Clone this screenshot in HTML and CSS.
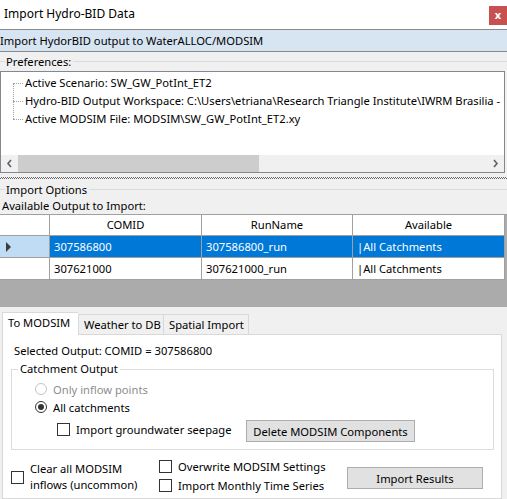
FILE: index.html
```html
<!DOCTYPE html>
<html lang="en">
<head>
  <meta charset="UTF-8">
  <title>Import Hydro-BID Data</title>
  <link rel="stylesheet" href="styles.css">
</head>
<body>

<div class="window">

  <!-- Title bar -->
  <div class="titlebar">
    <span class="title">Import Hydro-BID Data</span>
    <span class="close">x</span>
  </div>

  <div class="banner">Import HydorBID output to WaterALLOC/MODSIM</div>

  <!-- Preferences -->
  <div class="group-label"><span>Preferences:</span></div>
  <div class="tree">
    <div class="tree-items">
      <div class="tree-item">Active Scenario: SW_GW_PotInt_ET2</div>
      <div class="tree-item">Hydro-BID Output Workspace: C:\Users\etriana\Research Triangle Institute\IWRM Brasilia -</div>
      <div class="tree-item last">Active MODSIM File: MODSIM\SW_GW_PotInt_ET2.xy</div>
    </div>
    <div class="hscroll">
      <div class="arrow">
        <svg width="7" height="9" viewBox="0 0 7 9"><path d="M5 1 L2 4.5 L5 8" fill="none" stroke="#606060" stroke-width="1.6"/></svg>
      </div>
      <div class="track"><div class="thumb"></div></div>
      <div class="arrow">
        <svg width="7" height="9" viewBox="0 0 7 9"><path d="M2 1 L5 4.5 L2 8" fill="none" stroke="#606060" stroke-width="1.6"/></svg>
      </div>
    </div>
  </div>

  <div class="splitter"></div>

  <!-- Import options -->
  <div class="group-label short"><span>Import Options</span></div>
  <div class="caption">Available Output to Import:</div>

  <div class="grid">
    <div class="table">
      <div class="cell rowhead head"></div>
      <div class="cell head">COMID</div>
      <div class="cell head">RunName</div>
      <div class="cell head">Available</div>

      <div class="cell rowhead selected-head"><span class="pointer"></span></div>
      <div class="cell selected">307586800</div>
      <div class="cell selected">307586800_run</div>
      <div class="cell selected">|All Catchments</div>

      <div class="cell rowhead"></div>
      <div class="cell">307621000</div>
      <div class="cell">307621000_run</div>
      <div class="cell">|All Catchments</div>
    </div>
  </div>

  <div class="tabs">
    <div class="tab active">To MODSIM</div>
    <div class="tab">Weather to DB</div>
    <div class="tab">Spatial Import</div>
  </div>

  <div class="tab-page">
    <div class="selected-output">Selected Output: COMID = 307586800</div>

    <fieldset class="catchment">
      <legend>Catchment Output</legend>
      <div class="radio-row disabled"><span class="radio"></span>Only inflow points</div>
      <div class="radio-row"><span class="radio on"></span>All catchments</div>
      <div class="check-row">
        <label class="check-label"><span class="checkbox"></span>Import groundwater seepage</label>
        <button class="button delete">Delete MODSIM Components</button>
      </div>
    </fieldset>

    <div class="options">
      <label class="clear"><span class="checkbox"></span><span>Clear all MODSIM<br>inflows (uncommon)</span></label>
      <div class="checks">
        <label class="check-label"><span class="checkbox"></span>Overwrite MODSIM Settings</label>
        <label class="check-label"><span class="checkbox"></span>Import Monthly Time Series</label>
      </div>
      <button class="button import">Import Results</button>
    </div>
  </div>

</div>

</body>
</html>
```

FILE: styles.css
```css
* {
  box-sizing: border-box;
}

body {
  margin: 0;
  font-family: "Noto Sans", "Segoe UI", sans-serif;
  font-size: 11.2px;
  color: #000;
}

.window {
  width: 507px;
  height: 499px;
  overflow: hidden;
  background: #f0f0f0;
  display: flex;
  flex-direction: column;
}

/* Title bar */
.titlebar {
  height: 30px;
  flex-shrink: 0;
  background: #fff;
  border-bottom: 1px solid #8a8a8a;
  display: flex;
  justify-content: space-between;
  align-items: flex-start;
  padding-left: 4px;
}

.title {
  font-size: 12px;
  line-height: 28px;
}

.close {
  width: 18px;
  height: 19px;
  margin-top: 6px;
  background: #c75050;
  color: #fff;
  font-weight: bold;
  font-size: 11px;
  line-height: 17px;
  text-align: center;
}

.banner {
  height: 22px;
  flex-shrink: 0;
  background: #d7e4f2;
  border-bottom: 1px solid #8a8a8a;
  line-height: 21px;
  white-space: nowrap;
}

/* Group box captions */
.group-label {
  height: 19px;
  flex-shrink: 0;
  display: flex;
  align-items: center;
}

.group-label::before {
  content: "";
  width: 5px;
  border-top: 1px solid #dcdcdc;
}

.group-label::after {
  content: "";
  flex: 1;
  border-top: 1px solid #dcdcdc;
}

.group-label span {
  padding: 0 2px 0 1px;
}

.group-label.short {
  height: 16px;
}

/* Tree view */
.tree {
  width: 505px;
  height: 102px;
  flex-shrink: 0;
  background: #fff;
  border: 1px solid #828790;
  display: flex;
  flex-direction: column;
}

.tree-items {
  flex: 1;
  padding-top: 2px;
  overflow: hidden;
}

.tree-item {
  position: relative;
  height: 18px;
  line-height: 18px;
  padding-left: 24px;
  white-space: nowrap;
}

.tree-item::before {
  content: "";
  position: absolute;
  left: 12px;
  top: 9px;
  width: 10px;
  border-top: 1px dotted #a0a0a0;
}

.tree-item::after {
  content: "";
  position: absolute;
  left: 12px;
  top: 9px;
  height: 18px;
  border-left: 1px dotted #a0a0a0;
}

.tree-item.last::after {
  display: none;
}

.hscroll {
  height: 17px;
  display: flex;
  background: #f0f0f0;
}

.arrow {
  width: 17px;
  display: flex;
  align-items: center;
  justify-content: center;
}

.track {
  flex: 1;
}

.thumb {
  width: 241px;
  height: 100%;
  background: #cdcdcd;
}

.splitter {
  height: 8px;
  flex-shrink: 0;
  border-top: 4px solid #f0f0f0;
  border-bottom: 2px solid #f0f0f0;
  background: conic-gradient(#6a6a6a 25%, transparent 0 50%, #6a6a6a 0 75%, transparent 0) 0 0 / 2px 2px;
}

.caption {
  height: 17px;
  flex-shrink: 0;
  line-height: 18px;
  padding-left: 2px;
}

/* Data grid */
.grid {
  height: 93px;
  flex-shrink: 0;
  background: #ababab;
}

.table {
  display: grid;
  grid-template-columns: 50px 152px 151px 152px;
  border-top: 1px solid #a0a0a0;
}

.cell {
  height: 22px;
  line-height: 21px;
  padding-left: 4px;
  background: #fff;
  border-right: 1px solid #a0a0a0;
  border-bottom: 1px solid #a0a0a0;
  white-space: nowrap;
  overflow: hidden;
}

.cell.head {
  height: 21px;
  line-height: 20px;
  text-align: center;
  padding-left: 0;
}

.cell.selected {
  background: #0078d7;
  color: #fff;
}

.cell.selected-head {
  background: #bfdcf4;
  display: flex;
  align-items: center;
  padding-left: 6px;
}

.pointer {
  width: 0;
  height: 0;
  border-top: 5px solid transparent;
  border-bottom: 5px solid transparent;
  border-left: 5px solid #3c3c3c;
}

/* Tabs */
.tabs {
  height: 27px;
  flex-shrink: 0;
  display: flex;
  align-items: flex-end;
  padding-left: 2px;
}

.tab {
  height: 20px;
  line-height: 19px;
  padding-left: 5px;
  background: #f0f0f0;
  border: 1px solid #d9d9d9;
  border-bottom: none;
  white-space: nowrap;
}

.tab:nth-child(2) {
  width: 86px;
}

.tab:nth-child(3) {
  width: 85px;
  border-left: none;
}

.tab.active {
  position: relative;
  z-index: 1;
  width: 76px;
  height: 23px;
  margin-bottom: -1px;
  line-height: 20px;
  background: #fff;
  border-right: none;
}

.tab-page {
  flex: 1;
  margin: 0 5px 0 2px;
  padding: 8px 7px 0 8px;
  background: #fff;
  border: 1px solid #d9d9d9;
}

.selected-output {
  height: 16px;
  line-height: 16px;
  padding-left: 3px;
}

.catchment {
  margin: 2px 0 0 0;
  padding: 0 0 7px 6px;
  border: 1px solid #dcdcdc;
}

.catchment legend {
  padding: 0 2px;
  line-height: 16px;
}

.radio-row {
  height: 18px;
  display: flex;
  align-items: center;
  padding-left: 17px;
}

.radio-row:first-of-type {
  margin-top: 3px;
}

.radio-row.disabled {
  color: #8d8d8d;
}

.radio {
  width: 12px;
  height: 12px;
  margin-right: 6px;
  border: 1px solid #333;
  border-radius: 50%;
  display: flex;
  align-items: center;
  justify-content: center;
}

.disabled .radio {
  border-color: #c4c4c4;
}

.radio.on::after {
  content: "";
  width: 6px;
  height: 6px;
  border-radius: 50%;
  background: #333;
}

.check-row {
  height: 22px;
  margin-top: 4px;
  display: flex;
  align-items: center;
}

.check-label {
  display: flex;
  align-items: center;
  white-space: nowrap;
}

.check-row .check-label {
  width: 228px;
  padding-left: 39px;
  margin-bottom: 3px;
}

.checkbox {
  width: 13px;
  height: 13px;
  margin-right: 6px;
  flex-shrink: 0;
  background: #fff;
  border: 1px solid #333;
}

.button {
  height: 22px;
  padding: 0;
  font: inherit;
  color: #000;
  background: #e1e1e1;
  border: 1px solid #adadad;
}

.delete {
  width: 169px;
}

.options {
  display: flex;
  margin-top: 9px;
}

.clear {
  width: 148px;
  display: flex;
  align-items: center;
  line-height: 16px;
}

.checks {
  width: 188px;
  margin-top: -2px;
}

.checks .check-label {
  height: 19px;
}

.import {
  width: 136px;
  margin-top: 8px;
}
```
